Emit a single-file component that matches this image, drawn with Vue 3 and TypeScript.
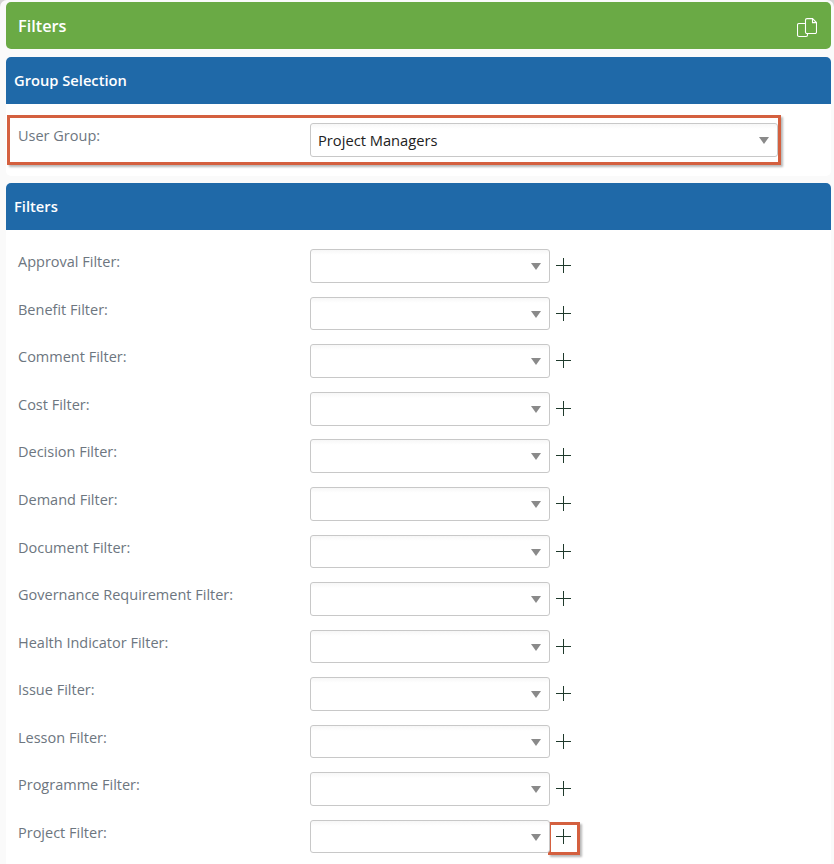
<script setup lang="ts">
const filters: string[] = [
  'Approval Filter:', 'Benefit Filter:', 'Comment Filter:', 'Cost Filter:', 'Decision Filter:',
  'Demand Filter:', 'Document Filter:', 'Governance Requirement Filter:', 'Health Indicator Filter:',
  'Issue Filter:', 'Lesson Filter:', 'Programme Filter:', 'Project Filter:',
]
</script>

<template>
  <div class="page">
    <header class="title">
      <span>Filters</span>
      <svg class="copy" width="20" height="20" viewBox="0 0 20 20" fill="none" stroke="#fff" stroke-width="1.1">
        <path d="M8 5.500H2a1.500 1.500 0 0 0-1.500 1.500v10A1.500 1.500 0 0 0 2 18.500h7A1.500 1.500 0 0 0 10.500 17v-1.500" />
        <path d="M10 .6h5.500l4 4V14a1.500 1.500 0 0 1-1.500 1.500h-8A1.500 1.500 0 0 1 8.500 14V2.100A1.500 1.500 0 0 1 10 .6Z" />
        <path d="M15.500 .6V4.600H19.500" />
      </svg>
    </header>

    <section class="panel group">
      <h2 class="bar">Group Selection</h2>
      <div class="group-body">
        <div class="highlight group-row">
          <label class="label">User Group:</label>
          <div class="select wide"><span class="value">Project Managers</span><i class="caret"></i></div>
        </div>
      </div>
    </section>

    <section class="panel">
      <h2 class="bar">Filters</h2>
      <div class="rows">
        <div v-for="(f, i) in filters" :key="f" class="row">
          <label class="label">{{ f }}</label>
          <div class="select"><i class="caret"></i></div>
          <span class="add" :class="{ 'add-on': i === filters.length - 1 }">
            <svg width="15" height="15" viewBox="0 0 15 15" stroke="#1f3a2c" stroke-width="1">
              <path d="M0 7.500H15M7.500 0V15" />
            </svg>
          </span>
        </div>
      </div>
    </section>
  </div>
</template>

<style>
html, body { margin: 0; background: #d4d4d4; }
</style>

<style scoped>
.page {
  width: 834px;
  height: 864px;
  box-sizing: border-box;
  padding: 2px 3px 0 6px;
  overflow: hidden;
  background: #fafafa;
  border-radius: 7px 7px 0 0;
  font-family: "Open Sans", "Noto Sans", sans-serif;
  font-size: 14.500px;
  color: #6d7680;
}
.title {
  height: 47px;
  background: #6aaa45;
  border-radius: 5px;
  display: flex;
  align-items: center;
  justify-content: space-between;
  padding: 0 14px 0 12px;
  color: #fff;
  font-size: 16.300px;
  font-weight: 600;
}
.copy { margin-top: 5px; }
.panel { background: #fff; border-radius: 5px; }
.group { margin-top: 8px; height: 119px; margin-bottom: 7px; }
.bar {
  margin: 0;
  height: 47px;
  line-height: 47px;
  padding-left: 8px;
  background: #1f69a8;
  border-radius: 5px 5px 0 0;
  color: #fff;
  font-size: 14.700px;
  font-weight: 600;
}
.group-body { padding: 11px 0 0 1px; }
.highlight {
  border: 3px solid #d4603f;
  box-shadow: 2px 2px 2px rgba(0, 0, 0, 0.28);
}
.group-row {
  box-sizing: border-box;
  width: 774px;
  height: 50px;
  display: flex;
  padding: 5px 0 0 8px;
}
.group-row .label { width: 292px; line-height: 20px; padding-top: 3px; }
.select {
  box-sizing: border-box;
  position: relative;
  flex: none;
  width: 240px;
  height: 33.600px;
  border: 1px solid #c8c8c8;
  border-radius: 3px;
  background: linear-gradient(#f7f7f7, #fff 5px);
}
.select.wide { width: 468px; }
.value { display: block; padding-left: 7px; line-height: 33px; color: #222; font-size: 14.700px; }
.caret {
  position: absolute;
  right: 8px;
  top: 13px;
  width: 0;
  height: 0;
  border-left: 5px solid transparent;
  border-right: 5px solid transparent;
  border-top: 7px solid #8a8a8a;
}
.rows { padding: 19.300px 0 0 12px; }
.row {
  height: 47.550px;
  display: flex;
  align-items: flex-start;
}
.row .label { width: 292px; flex: none; line-height: 20px; padding-top: 3px; }
.add {
  box-sizing: border-box;
  margin: 2px 0 0 -2px;
  width: 32px;
  height: 33px;
  display: flex;
  align-items: center;
  justify-content: center;
  border: 3px solid transparent;
}
.add svg { display: block; margin: -4px 1px 0 0; }
.add-on {
  border-color: #d4603f;
  box-shadow: 2px 2px 2px rgba(0, 0, 0, 0.28);
}
</style>
